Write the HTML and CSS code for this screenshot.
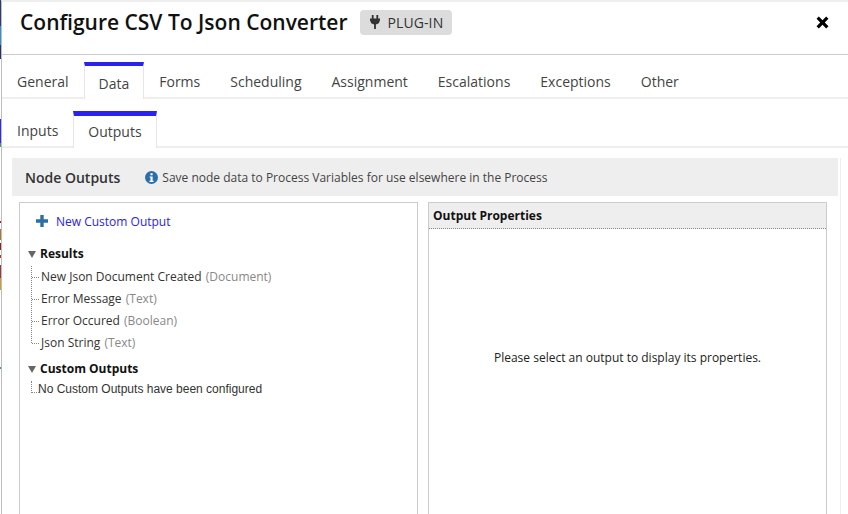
FILE: index.html
```html
<!DOCTYPE html>
<html lang="en">
<head>
<meta charset="utf-8">
<title>Configure CSV To Json Converter</title>
<link rel="stylesheet" href="styles.css">
</head>
<body>
<div class="app">
  <div class="edge"></div>
  <main class="dialog">
    <header class="head">
      <h1 class="title">Configure CSV To Json Converter</h1>
      <span class="badge">
        <svg class="plug" viewBox="0 0 10 14" width="10" height="14"><path d="M1.800 0h1.800v3.400H1.800zM6.400 0h1.800v3.400H6.400zM0 3.600h10v1.600L8.800 8.200 5.900 9.400V14H4.100V9.400L1.200 8.200 0 5.200z" fill="#333"/></svg>
        PLUG-IN
      </span>
      <svg class="close" viewBox="0 0 12 12" width="13" height="13"><path d="M2.600.5 6 3.900 9.400.5l2.100 2.100L8.100 6l3.400 3.400-2.100 2.100L6 8.100 2.600 11.500.5 9.400 3.900 6 .5 2.600z" fill="#000"/></svg>
    </header>
    <nav class="tabs">
      <a class="tab">General</a>
      <a class="tab active">Data</a>
      <a class="tab">Forms</a>
      <a class="tab">Scheduling</a>
      <a class="tab">Assignment</a>
      <a class="tab">Escalations</a>
      <a class="tab">Exceptions</a>
      <a class="tab">Other</a>
    </nav>
    <nav class="tabs sub">
      <a class="tab">Inputs</a>
      <a class="tab active">Outputs</a>
    </nav>
    <section class="content">
      <div class="band">
        <h2 class="band-title">Node Outputs</h2>
        <svg class="info" viewBox="0 0 14 14" width="13" height="13"><circle cx="7" cy="7" r="7" fill="#2a6fa8"/><rect x="5.900" y="2.400" width="2.300" height="2.200" fill="#fff"/><path d="M4.900 5.800h3.300v4.700h1.100v1.300H4.800v-1.300h1.100V7.100h-1z" fill="#fff"/></svg>
        <span class="band-note">Save node data to Process Variables for use elsewhere in the Process</span>
      </div>
      <div class="panels">
        <div class="panel tree-panel">
          <a class="add">
            <svg viewBox="0 0 12 12" width="12" height="12"><path d="M4.300 0h3.400v4.300H12v3.400H7.700V12H4.300V7.700H0V4.300h4.300z" fill="#2a6fa8"/></svg>
            New Custom Output
          </a>
          <div class="group"><span class="caret"></span>Results</div>
          <ul class="leaves">
            <li>New Json Document Created <span class="type">(Document)</span></li>
            <li>Error Message <span class="type">(Text)</span></li>
            <li>Error Occured <span class="type">(Boolean)</span></li>
            <li>Json String <span class="type">(Text)</span></li>
          </ul>
          <div class="group second"><span class="caret"></span>Custom Outputs</div>
          <div class="empty">No Custom Outputs have been configured</div>
        </div>
        <div class="panel props">
          <div class="props-head">Output Properties</div>
          <p class="props-msg">Please select an output to display its properties.</p>
        </div>
      </div>
    </section>
  </main>
</div>
</body>
</html>
```
FILE: styles.css
```css
* { box-sizing: border-box; }
html, body { margin: 0; height: 514px; overflow: hidden; background: #fff; }
body { font-family: "Open Sans", "Liberation Sans", sans-serif; color: #333; }
.app { display: flex; height: 514px; }
.edge {
  width: 1px; flex: none;
  background: linear-gradient(to bottom,
    #2b3a7a 0 26px, #2b8fdc 26px 45px, #24306f 45px 59px, #fff 59px 119px,
    #2b2bee 119px 143px, #2fa85a 143px 147px, #fff 147px 221px, #9c2a1c 221px 223px, #fff 223px 229px,
    #b8732a 229px 240px, #fff 240px 243px, #9c1c1c 243px 250px, #fff 250px 255px, #b83a2a 255px 258px,
    #fff 258px 265px, #a33 265px 278px, #c9a02a 278px 290px, #fff 290px 367px, #2fa85a 367px 369px, #fff 369px);
}
.dialog { flex: 1; min-width: 0; border-left: 1px solid #bdbdbd; border-top: 2px solid #eee; }
.head { height: 53px; padding: 0 18px 12px; display: flex; align-items: center; border-bottom: 1px solid #ccc; }
.title { margin: 0; font-size: 21px; font-weight: 600; color: #111; line-height: 30px; white-space: nowrap; }
.badge {
  margin-left: 12px; height: 25px; padding: 0 9px 0 10px; display: flex; align-items: center; gap: 8px;
  background: #dcdcdc; border-radius: 4px; font-size: 14px; color: #333; letter-spacing: .1px;
}
.close { margin-left: auto; margin-right: 1px; }
.tabs { display: flex; height: 44px; border-bottom: 2px solid #eee; }
.tab { padding: 12px 15px 0; height: 44px; font-size: 14px; line-height: 30px; color: #444; white-space: nowrap; }
.tab.active { border-top: 4px solid #2a22ee; border-left: 1px solid #e6e6e6; border-right: 1px solid #e6e6e6; padding: 3px 14px 0; margin-top: 7px; height: 37px; background: #fff; }
.sub { height: 49px; }
.sub .tab { padding-top: 17px; height: 49px; }
.sub .tab.active { border-top-width: 5px; margin-top: 12px; height: 37px; padding: 0 14px; line-height: 31px; }
.content { margin: 10px 7px 0 10px; padding-right: 2px; border-right: 1px solid #eee; height: 360px; }
.band { height: 38px; background: #eee; display: flex; align-items: center; padding-left: 13px; }
.band-title { margin: 0 25px 0 0; font-size: 14px; font-weight: 600; color: #333; }
.band-note { font-size: 12px; margin-left: 4px; color: #444; }
.panels { display: flex; gap: 10px; padding: 6px 11px 0 7px; }
.panel { height: 320px; border: 1px solid #ccc; border-bottom: 0; width: 399px; flex: none; }
.tree-panel { padding: 10px 0 0 8px; }
.add { display: flex; align-items: center; gap: 8px; margin-left: 8px; font-size: 12px; color: #2a22ee; height: 16px; }
.group { font-size: 12px; font-weight: 700; color: #111; line-height: 16px; margin-top: 17px; display: flex; align-items: center; }
.group.second { margin-top: 18px; }
.caret { width: 0; height: 0; border-left: 4px solid transparent; border-right: 4px solid transparent; border-top: 7px solid #666; margin-right: 4px; }
.leaves { list-style: none; margin: 4px 0 0 3px; padding: 0; border-left: 1px dotted #888; height: 77px; font-size: 12px; }
.leaves li { height: 22px; line-height: 22px; padding-left: 9px; color: #333; position: relative; white-space: nowrap; }
.leaves li::before { content: ""; position: absolute; left: 0; top: 11px; width: 7px; border-top: 1px dotted #888; }
.type { color: #888; margin-left: 1px; }
.empty { font-family: "Liberation Sans", Arial, sans-serif; font-size: 12px; color: #333; margin: 4px 0 0 3px; padding-left: 7px; height: 16px; line-height: 16px; position: relative; }
.empty::before { content: ""; position: absolute; left: 0; top: 0; width: 7px; height: 11px; border-left: 1px dotted #888; border-bottom: 1px dotted #888; }
.props { display: flex; flex-direction: column; }
.props-head { height: 26px; background: #eee; border-bottom: 1px dotted #888; font-size: 12px; font-weight: 700; color: #111; line-height: 25px; padding-left: 4px; }
.props-msg { margin: 120px 0 0; text-align: center; font-size: 12px; line-height: 17px; color: #222; }
```
